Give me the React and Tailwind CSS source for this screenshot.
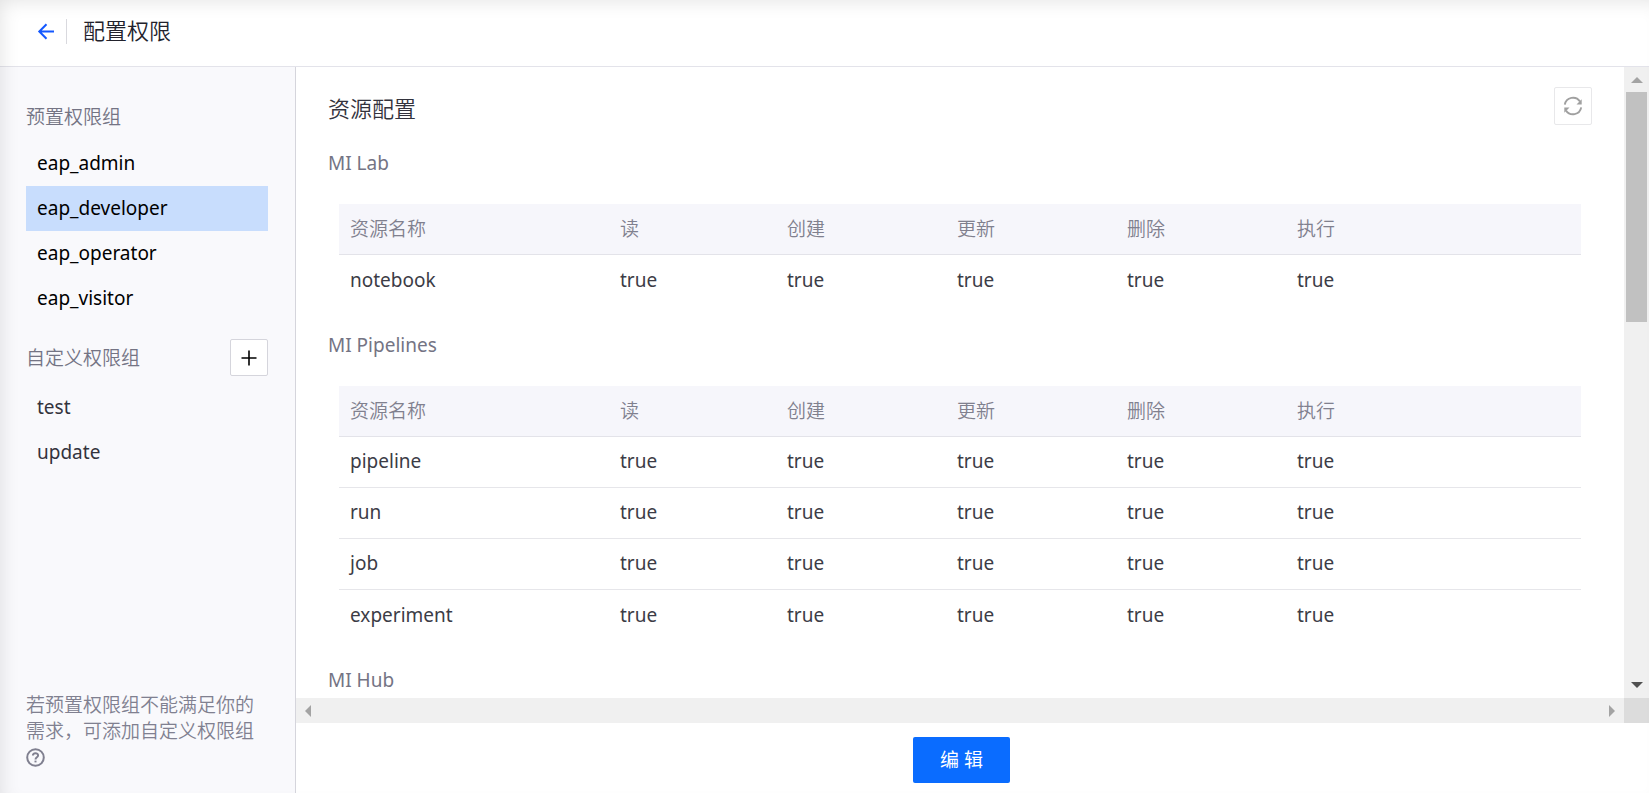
const presetGroups = ["eap_admin", "eap_developer", "eap_operator", "eap_visitor"];
const customGroups = ["test", "update"];
const columns = ["资源名称", "读", "创建", "更新", "删除", "执行"];
const sections = [
  { title: "MI Lab", rows: ["notebook"] },
  { title: "MI Pipelines", rows: ["pipeline", "run", "job", "experiment"] },
  { title: "MI Hub", rows: [] },
];

function Header() {
  return (
    <header className="flex h-[67px] shrink-0 items-center border-b border-[#e3e3ea] bg-white pb-1 pl-9">
      <a href="#back" aria-label="返回" className="text-[#1458ff]">
        <svg width="20" height="20" viewBox="0 0 20 20" fill="none" stroke="currentColor" strokeWidth="2">
          <path d="M18 10.5H3.5M10.5 3.3L3.3 10.5l7.2 7.2" />
        </svg>
      </a>
      <span className="ml-2.5 h-[25px] w-px bg-[#d9d9de]" />
      <h1 className="mb-0.5 ml-4 text-[22px] leading-8 font-[350] text-[#22222c]">配置权限</h1>
    </header>
  );
}

function GroupItem({ name, active, tone }) {
  return (
    <li>
      <button
        type="button"
        className={`block h-[45px] w-full pl-[11px] text-left ${tone} ${active ? "bg-[#c8ddfd]" : ""}`}
      >
        {name}
      </button>
    </li>
  );
}

function Sidebar() {
  return (
    <aside className="flex w-[296px] shrink-0 flex-col border-r border-[#d5d5dc] bg-[#f9f9fc] pt-9 pr-[27px] pb-[26px] pl-[26px]">
      <h2 className="leading-7 font-[350] text-[#747484]">预置权限组</h2>
      <ul className="mt-2.5">
        {presetGroups.map((name) => (
          <GroupItem key={name} name={name} active={name === "eap_developer"} tone="text-black" />
        ))}
      </ul>
      <div className="mt-[18px] flex items-center justify-between">
        <h2 className="leading-7 font-[350] text-[#747484]">自定义权限组</h2>
        <button
          type="button"
          aria-label="添加自定义权限组"
          className="flex h-[37px] w-[38px] items-center justify-center rounded-[2px] border border-[#d5d5dc] bg-white text-black"
        >
          <svg width="16" height="16" viewBox="0 0 16 16" stroke="currentColor" strokeWidth="1.6">
            <path d="M8 .5v15M.5 8h15" />
          </svg>
        </button>
      </div>
      <ul className="mt-[9px]">
        {customGroups.map((name) => (
          <GroupItem key={name} name={name} tone="text-[#33333d]" />
        ))}
      </ul>
      <p className="mt-auto leading-[26px] font-[350] text-[#808090]">
        若预置权限组不能满足你的需求，可添加自定义权限组
        <svg className="mt-1 block" width="19" height="19" viewBox="0 0 19 19" fill="none" stroke="currentColor" strokeWidth="2">
          <circle cx="9.5" cy="9.5" r="8.3" />
          <path d="M6.9 7.6c0-3.3 5.2-3.2 5.2-.2 0 1.8-2.6 1.9-2.6 4" />
          <path d="M9.5 12.6v1.8" />
        </svg>
      </p>
    </aside>
  );
}

function ResourceTable({ rows }) {
  return (
    <table className="w-full table-fixed border-collapse text-left">
      <colgroup>
        <col className="w-[270px]" />
        <col className="w-[167px]" />
        <col className="w-[170px]" />
        <col className="w-[170px]" />
        <col className="w-[170px]" />
        <col />
      </colgroup>
      <thead>
        <tr className="h-[50px] border-b border-[#e3e3e9] bg-[#f6f6fb]">
          {columns.map((label) => (
            <th key={label} className="px-[11px] font-[350] text-[#80808e]">{label}</th>
          ))}
        </tr>
      </thead>
      <tbody>
        {rows.map((row) => (
          <tr key={row} className="h-[51px] border-b border-[#e6e6ea] last:border-0">
            <td className="px-[11px]">{row}</td>
            {columns.slice(1).map((label) => (
              <td key={label} className="px-[11px]">true</td>
            ))}
          </tr>
        ))}
      </tbody>
    </table>
  );
}

function Arrow({ d, className }) {
  return (
    <svg width="12" height="12" viewBox="0 0 12 12" className={className} fill="currentColor">
      <path d={d} />
    </svg>
  );
}

export default function App() {
  return (
    <div className="relative flex h-screen flex-col bg-white font-['Noto_Sans','Noto_Sans_CJK_SC',sans-serif] text-[19px] text-[#3c3c46]">
      <Header />
      <div className="flex min-h-0 flex-1">
        <Sidebar />
        <div className="flex min-w-0 flex-1 flex-col">
          <div className="grid min-h-0 flex-1 grid-cols-[minmax(0,1fr)_25px] grid-rows-[minmax(0,1fr)_25px]">
            <main className="overflow-hidden pr-8 pl-8">
              <div className="flex items-start justify-between pt-5">
                <h2 className="pt-[5px] text-[22px] leading-8 font-[350] text-[#33333d]">资源配置</h2>
                <button
                  type="button"
                  aria-label="刷新"
                  className="flex size-[38px] items-center justify-center rounded-[2px] border border-[#e8e8ea] text-[#a0a0a0]"
                >
                  <svg width="20" height="20" viewBox="0 0 20 20" fill="none" stroke="currentColor" strokeWidth="1.9">
                    <path d="M1.8 8.6A8.3 8.3 0 0 1 17 5.6M18.2 11.4A8.3 8.3 0 0 1 3 14.4" />
                    <path d="M18.7 3.2v5.2h-5.2zM1.3 16.8v-5.2h5.2z" fill="currentColor" stroke="none" />
                  </svg>
                </button>
              </div>
              <div className="mt-6 flex flex-col gap-[26px]">
                {sections.map(({ title, rows }) => (
                  <section key={title}>
                    <h3 className="leading-7 text-[#747484]">{title}</h3>
                    {rows.length > 0 && (
                      <div className="mt-[27px] px-[11px]">
                        <ResourceTable rows={rows} />
                      </div>
                    )}
                  </section>
                ))}
              </div>
            </main>
            <div className="flex flex-col items-center bg-[#f0f0f0]">
              <Arrow d="M6 3l6 6H0z" className="mt-[7px] mb-1.5 shrink-0 text-[#a3a3a3]" />
              <div className="h-[230px] w-[21px] bg-[#c1c1c1]" />
              <Arrow d="M0 3h12L6 9z" className="mt-auto mb-[7px] text-[#505050]" />
            </div>
            <div className="flex items-center justify-between bg-[#f0f0f0] px-1.5 text-[#a3a3a3]">
              <Arrow d="M3 6l6-6v12z" />
              <Arrow d="M3 0l6 6-6 6z" />
            </div>
            <div className="bg-[#dcdcdc]" />
          </div>
          <footer className="flex h-[70px] shrink-0 items-start justify-center pt-3.5 pr-[22px]">
            <button type="button" className="h-[46px] w-[97px] rounded-[2px] bg-[#0a6cff] text-white">
              编 辑
            </button>
          </footer>
        </div>
      </div>
      <div className="pointer-events-none absolute inset-0 overflow-hidden shadow-[inset_8px_8px_20px_-8px_rgba(0,0,0,0.12)]" />
    </div>
  );
}
